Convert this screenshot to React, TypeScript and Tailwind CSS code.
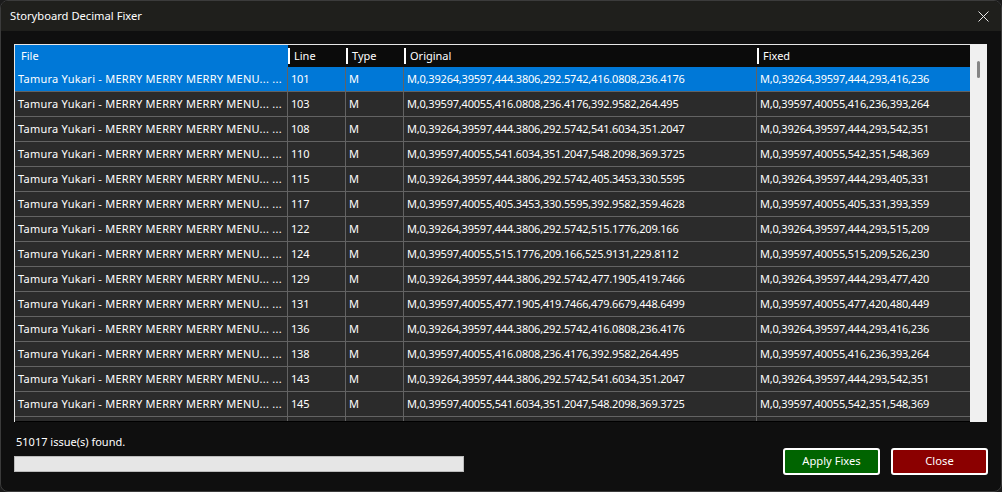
import React from "react";

type Row = { line: number; original: string; fixed: string };

const rows: Row[] = [
  { line: 101, original: "M,0,39264,39597,444.3806,292.5742,416.0808,236.4176", fixed: "M,0,39264,39597,444,293,416,236" },
  { line: 103, original: "M,0,39597,40055,416.0808,236.4176,392.9582,264.495", fixed: "M,0,39597,40055,416,236,393,264" },
  { line: 108, original: "M,0,39264,39597,444.3806,292.5742,541.6034,351.2047", fixed: "M,0,39264,39597,444,293,542,351" },
  { line: 110, original: "M,0,39597,40055,541.6034,351.2047,548.2098,369.3725", fixed: "M,0,39597,40055,542,351,548,369" },
  { line: 115, original: "M,0,39264,39597,444.3806,292.5742,405.3453,330.5595", fixed: "M,0,39264,39597,444,293,405,331" },
  { line: 117, original: "M,0,39597,40055,405.3453,330.5595,392.9582,359.4628", fixed: "M,0,39597,40055,405,331,393,359" },
  { line: 122, original: "M,0,39264,39597,444.3806,292.5742,515.1776,209.166", fixed: "M,0,39264,39597,444,293,515,209" },
  { line: 124, original: "M,0,39597,40055,515.1776,209.166,525.9131,229.8112", fixed: "M,0,39597,40055,515,209,526,230" },
  { line: 129, original: "M,0,39264,39597,444.3806,292.5742,477.1905,419.7466", fixed: "M,0,39264,39597,444,293,477,420" },
  { line: 131, original: "M,0,39597,40055,477.1905,419.7466,479.6679,448.6499", fixed: "M,0,39597,40055,477,420,480,449" },
  { line: 136, original: "M,0,39264,39597,444.3806,292.5742,416.0808,236.4176", fixed: "M,0,39264,39597,444,293,416,236" },
  { line: 138, original: "M,0,39597,40055,416.0808,236.4176,392.9582,264.495", fixed: "M,0,39597,40055,416,236,393,264" },
  { line: 143, original: "M,0,39264,39597,444.3806,292.5742,541.6034,351.2047", fixed: "M,0,39264,39597,444,293,542,351" },
  { line: 145, original: "M,0,39597,40055,541.6034,351.2047,548.2098,369.3725", fixed: "M,0,39597,40055,542,351,548,369" },
  { line: 150, original: "M,0,39264,39597,444.3806,292.5742,405.3453,330.5595", fixed: "M,0,39264,39597,444,293,405,331" },
];

const fileName = "Tamura Yukari - MERRY MERRY MERRY MENU... ...";

const HeaderCell = ({ label, w, active }: { label: string; w: string; active?: boolean }) => (
  <div className={`${w} h-full shrink-0 flex items-center relative ${active ? "bg-[#0078d7]" : ""}`}>
    {!active && <div className="absolute left-0 top-[3px] bottom-[3px] w-[2px] bg-white" />}
    <span className="pl-[6px]">{label}</span>
  </div>
);

const Cell = ({ children, w, wide }: { children: React.ReactNode; w: string; wide?: boolean }) => (
  <div
    className={`${w} h-full shrink-0 flex items-center pl-[3px] border-r border-[#636363] whitespace-nowrap overflow-hidden ${wide ? "tracking-[0.25px]" : "tracking-[-0.2px]"}`}
  >
    {children}
  </div>
);

export default function App() {
  return (
    <div className="w-[1002px] h-[492px] bg-[#1b1b1b] font-['Noto_Sans',sans-serif] text-[11px] text-white">
      <div className="w-full h-full rounded-[8px] border border-[#3b3b3b] bg-[#0f0f0f] overflow-hidden flex flex-col">
        {/* title bar */}
        <div className="h-[30px] shrink-0 bg-[#1f1f1c] flex items-center justify-between pl-[9px] pr-[10px]">
          <span className="text-[11.2px]">Storyboard Decimal Fixer</span>
          <svg width="11" height="11" viewBox="0 0 11 11" className="mr-[2px]">
            <path d="M0.5 0.5 L10.5 10.5 M10.5 0.5 L0.5 10.5" stroke="#e8e8e8" strokeWidth="1" />
          </svg>
        </div>

        <div className="flex-1 flex flex-col pl-[13px] pr-[14px] pt-[13px]">
          {/* grid */}
          <div className="h-[378px] flex shrink-0">
            <div className="w-[956px] h-full flex flex-col border-t border-l border-[#e6e6e6] overflow-hidden">
              <div className="h-[22px] shrink-0 flex bg-[#0b0b0b]">
                <HeaderCell label="File" w="w-[273px]" active />
                <HeaderCell label="Line" w="w-[58px]" />
                <HeaderCell label="Type" w="w-[58px]" />
                <HeaderCell label="Original" w="w-[353px]" />
                <HeaderCell label="Fixed" w="w-[214px]" />
              </div>
              <div className="flex-1 overflow-hidden border-b border-black">
                {rows.map((r, i) => (
                  <div
                    key={i}
                    className={`h-[25px] flex border-b border-[#636363] ${i === 0 ? "bg-[#0078d7]" : "bg-[#2b2b2b]"}`}
                  >
                    <Cell w="w-[273px]" wide>{fileName}</Cell>
                    <Cell w="w-[58px]">{r.line}</Cell>
                    <Cell w="w-[58px]">M</Cell>
                    <Cell w="w-[353px]">{r.original}</Cell>
                    <Cell w="w-[214px]">{r.fixed}</Cell>
                  </div>
                ))}
              </div>
            </div>
            {/* scrollbar */}
            <div className="w-[17px] h-full bg-[#f0f0f0] flex justify-center pt-[17px]">
              <div className="w-[3px] h-[17px] rounded-full bg-[#858585]" />
            </div>
          </div>

          {/* footer */}
          <div className="flex justify-between items-start mt-[11px]">
            <div className="flex flex-col">
              <span className="pl-[2px] leading-[18px]">51017 issue(s) found.</span>
              <div className="mt-[5px] w-[450px] h-[16px] bg-[#e6e6e6] border border-[#bcbcbc]" />
            </div>
            <div className="flex gap-[11px] mt-[15px] mr-[-1px]">
              <button className="w-[97px] h-[27px] rounded-[3px] border-2 border-white bg-[#006400] text-white text-[11.2px]">
                Apply Fixes
              </button>
              <button className="w-[97px] h-[27px] rounded-[3px] border-2 border-white bg-[#8b0000] text-white text-[11.2px]">
                Close
              </button>
            </div>
          </div>
        </div>
      </div>
    </div>
  );
}
